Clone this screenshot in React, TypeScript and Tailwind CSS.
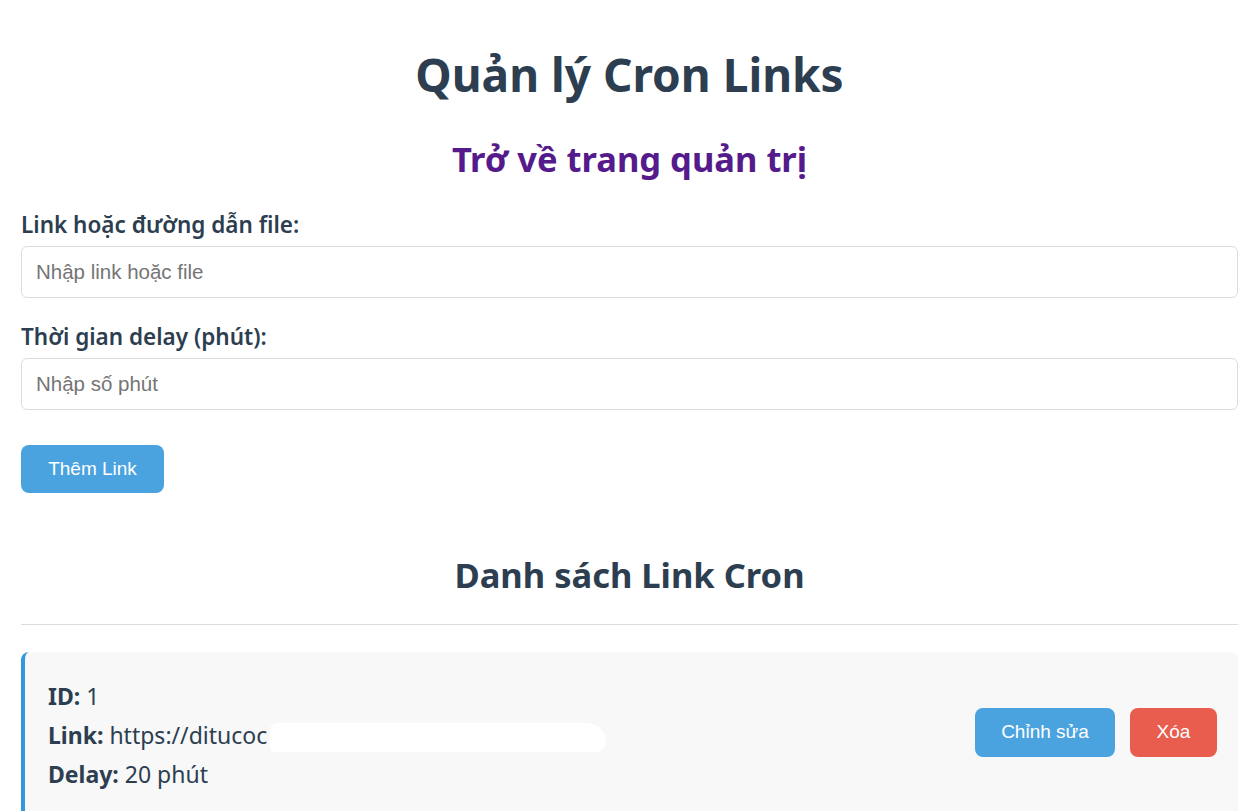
import React from "react";

const head = { fontFamily: '"Noto Sans", "Open Sans", sans-serif' };
const arial = { fontFamily: '"Liberation Sans", Arial, sans-serif' };

export default function App() {
  return (
    <div className="min-h-screen bg-white text-[#2c3e50]" style={head}>
      <div className="px-[21px] pt-[42px]">
        <h1 className="text-center text-[46px] font-bold leading-[64px]">Quản lý Cron Links</h1>
        <h2 className="mt-[30px] text-center text-[34.5px] font-bold leading-[46px]">
          <a href="#" className="text-[#551a8b]">Trở về trang quản trị</a>
        </h2>

        <form className="mt-[28px]" onSubmit={(e) => e.preventDefault()}>
          <label className="block text-[22.5px] font-semibold leading-[30px]">Link hoặc đường dẫn file:</label>
          <input
            type="text"
            placeholder="Nhập link hoặc file"
            style={arial}
            className="mt-[6px] block h-[52px] w-full rounded-[6px] border border-[#ddd] px-[14px] text-[20.5px] placeholder:text-[#757575] outline-none"
          />
          <label className="mt-[24px] block text-[22.5px] font-semibold leading-[30px]">Thời gian delay (phút):</label>
          <input
            type="number"
            placeholder="Nhập số phút"
            style={arial}
            className="mt-[6px] block h-[52px] w-full rounded-[6px] border border-[#ddd] px-[14px] text-[20.5px] placeholder:text-[#757575] outline-none"
          />
          <button
            type="submit"
            style={arial}
            className="mt-[35px] h-[48px] w-[143px] rounded-[8px] bg-[#4aa3df] text-[19px] text-white"
          >
            Thêm Link
          </button>
        </form>

        <h2 className="mt-[56px] text-center text-[34.5px] font-bold leading-[52px]">Danh sách Link Cron</h2>
        <hr className="mt-[23px] border-t border-[#ddd]" />

        <div className="mt-[27px] flex items-center justify-between rounded-[8px] border-l-4 border-[#3498db] bg-[#f8f8f8] pl-[23px] pr-[21px] pt-[25px] pb-[30px]">
          <div className="text-[23px] leading-[39px]">
            <div><b>ID:</b> 1</div>
            <div className="relative">
              <b>Link:</b> https://ditucoc
              <span className="absolute left-[222px] top-[7px] h-[29px] w-[336px] rounded-[14px_40px_20px_10px] bg-white" />
            </div>
            <div><b>Delay:</b> 20 phút</div>
          </div>
          <div className="flex gap-[15px] pb-[6px]" style={arial}>
            <button className="h-[49px] w-[140px] rounded-[8px] bg-[#4aa3df] text-[19px] text-white">Chỉnh sửa</button>
            <button className="h-[49px] w-[87px] rounded-[8px] bg-[#e85d4e] text-[19px] text-white">Xóa</button>
          </div>
        </div>
      </div>
    </div>
  );
}
